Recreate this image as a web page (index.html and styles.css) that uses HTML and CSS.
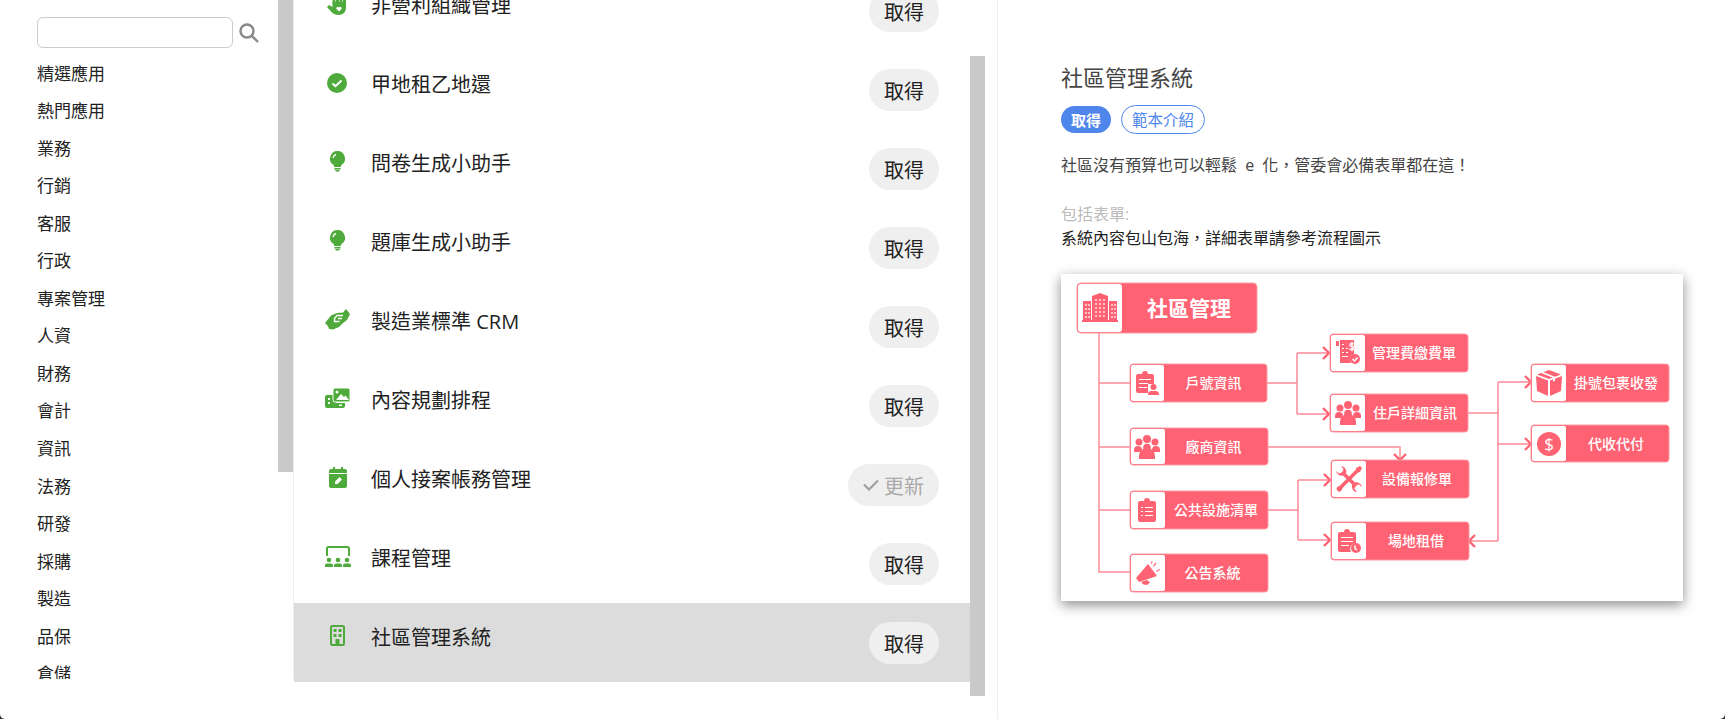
FILE: index.html
```html
<!DOCTYPE html>
<html lang="zh-Hant">

<head>
    <meta charset="UTF-8">
    <meta name="viewport" content="width=device-width, initial-scale=1.0">
    <title>範本中心</title>
    <link rel="stylesheet" href="styles.css">
</head>

<body>

    <div class="modal">
        <div class="sidebar">
            <div class="search">
                <input class="searchInput" type="text">
                <svg class="searchIcon" viewBox="0 0 20 20">
                    <circle cx="8" cy="8" r="6.5"></circle>
                    <path d="M12.8 12.8L19 19"></path>
                </svg>
            </div>
            <div class="catItem">精選應用</div>
            <div class="catItem">熱門應用</div>
            <div class="catItem">業務</div>
            <div class="catItem">行銷</div>
            <div class="catItem">客服</div>
            <div class="catItem">行政</div>
            <div class="catItem">專案管理</div>
            <div class="catItem">人資</div>
            <div class="catItem">財務</div>
            <div class="catItem">會計</div>
            <div class="catItem">資訊</div>
            <div class="catItem">法務</div>
            <div class="catItem">研發</div>
            <div class="catItem">採購</div>
            <div class="catItem">製造</div>
            <div class="catItem">品保</div>
            <div class="catItem">倉儲</div>
        </div>
        <div class="sideScroll">
            <div class="sideThumb"></div>
        </div>

        <div class="listWrap">
            <div class="list">
                <div class="row">
                    <svg class="rowIcon" viewBox="0 0 26 22">
                        <path d="M7.500 2h3v9h-3zM11 0h3v11h-3zM14.500 1h3v10h-3zM18 3h3v10h-3z"></path>
                        <path d="M7.500 9h13.500v6a7 7 0 0 1-7 7c-3.500 0-5.500-1-7.500-3l-4.500-5 2-2 3.500 2z"></path>
                        <path class="iconCut" d="M14 18.500l-2.700-2.800a1.500 1.500 0 0 1 2.700-1.200 1.500 1.500 0 0 1 2.700 1.200z"></path>
                    </svg>
                    <div class="rowName">非營利組織管理</div>
                    <button class="getBtn">取得</button>
                </div>
                <div class="row">
                    <svg class="rowIcon" viewBox="0 0 26 22">
                        <circle cx="12" cy="11" r="10"></circle>
                        <path class="iconLine" d="M7.500 11.500l3 2.700 6-5.700"></path>
                    </svg>
                    <div class="rowName">甲地租乙地還</div>
                    <button class="getBtn">取得</button>
                </div>
                <div class="row">
                    <svg class="rowIcon" viewBox="0 0 26 22">
                        <path d="M12.500 0a7.500 7.500 0 0 1 4.500 13.500c-.8.700-1 1.500-1.200 2.500H9.200c-.2-1-.4-1.800-1.200-2.500A7.500 7.500 0 0 1 12.500 0z"></path>
                        <path d="M9.300 17h6.400l-.3 1.500H9.600zM10 19h5l-1 1.500h-3z"></path>
                        <path class="iconLine thin" d="M8 7a4.500 4.500 0 0 1 3-3.500"></path>
                    </svg>
                    <div class="rowName">問卷生成小助手</div>
                    <button class="getBtn">取得</button>
                </div>
                <div class="row">
                    <svg class="rowIcon" viewBox="0 0 26 22">
                        <path d="M12.500 0a7.500 7.500 0 0 1 4.500 13.500c-.8.700-1 1.500-1.200 2.500H9.200c-.2-1-.4-1.800-1.200-2.500A7.500 7.500 0 0 1 12.500 0z"></path>
                        <path d="M9.300 17h6.400l-.3 1.500H9.600zM10 19h5l-1 1.500h-3z"></path>
                        <path class="iconLine thin" d="M8 7a4.500 4.500 0 0 1 3-3.500"></path>
                    </svg>
                    <div class="rowName">題庫生成小助手</div>
                    <button class="getBtn">取得</button>
                </div>
                <div class="row">
                    <svg class="rowIcon" viewBox="0 0 26 22">
                        <path d="M0 14L6 6.500 12 4l6-.5L21 0l4 5-3 6-4 3-4 4-6 2.500-4-.5-1-3z"></path>
                        <path class="iconLine thin" d="M18 6.500h-6l-2.500 3v3h5M13 9.500h4"></path>
                    </svg>
                    <div class="rowName">製造業標準 CRM</div>
                    <button class="getBtn">取得</button>
                </div>
                <div class="row">
                    <svg class="rowIcon" viewBox="0 0 26 22">
                        <path d="M2 7h9v13H2a2 2 0 0 1-2-2V9a2 2 0 0 1 2-2zM11 15h9v3a2 2 0 0 1-2 2h-7z"></path>
                        <path class="iconFront" d="M10 0h13a2 2 0 0 1 2 2v10a2 2 0 0 1-2 2H10a2 2 0 0 1-2-2V2a2 2 0 0 1 2-2z"></path>
                        <path class="iconCut" d="M11 12l5-6 3 3 1.500-1.500L24 12zM3 10h2v2H3zM3 14h2v2H3zM14 16.500h3v1.500h-3z"></path>
                        <circle class="iconCut" cx="12" cy="4" r="1.500"></circle>
                    </svg>
                    <div class="rowName">內容規劃排程</div>
                    <button class="getBtn">取得</button>
                </div>
                <div class="row">
                    <svg class="rowIcon" viewBox="0 0 26 22">
                        <path d="M8 0h2v3H8zM16 0h2v3h-2z"></path>
                        <path d="M6 2h14a2 2 0 0 1 2 2v15a2 2 0 0 1-2 2H6a2 2 0 0 1-2-2V4a2 2 0 0 1 2-2z"></path>
                        <path class="iconCut" d="M4 6h18v1H4zM10 17v-2.500l4.500-4.500 2.500 2.500-4.500 4.500z"></path>
                    </svg>
                    <div class="rowName">個人接案帳務管理</div>
                    <button class="getBtn doneBtn">
                        <svg class="doneCheck" viewBox="0 0 16 12">
                            <path d="M1 5.500L6 10.500 15 1.500"></path>
                        </svg>更新
                    </button>
                </div>
                <div class="row">
                    <svg class="rowIcon" viewBox="0 0 26 22">
                        <path class="iconLine green" d="M2 10V2.500a1.500 1.500 0 0 1 1.500-1.500h19a1.500 1.500 0 0 1 1.500 1.500V10"></path>
                        <circle cx="4" cy="14" r="2.300"></circle>
                        <circle cx="13" cy="14" r="2.300"></circle>
                        <circle cx="22" cy="14" r="2.300"></circle>
                        <path d="M0 21v-1.500a2 2 0 0 1 2-2h4a2 2 0 0 1 2 2V21zM9 21v-1.500a2 2 0 0 1 2-2h4a2 2 0 0 1 2 2V21zM18 21v-1.500a2 2 0 0 1 2-2h4a2 2 0 0 1 2 2V21z"></path>
                    </svg>
                    <div class="rowName">課程管理</div>
                    <button class="getBtn">取得</button>
                </div>
                <div class="row rowActive">
                    <svg class="rowIcon" viewBox="0 0 26 22">
                        <rect class="iconLine green" x="6" y="1" width="13" height="19" rx="1.500"></rect>
                        <path d="M8.500 4h3v3h-3zM13.500 4h3v3h-3zM8.500 9h3v3h-3zM13.500 9h3v3h-3zM10.500 14h4v6h-4z"></path>
                    </svg>
                    <div class="rowName">社區管理系統</div>
                    <button class="getBtn">取得</button>
                </div>
            </div>
            <div class="listThumb"></div>
        </div>

        <div class="detail">
            <div class="detailTitle">社區管理系統</div>
            <div class="detailBtns">
                <button class="primaryBtn">取得</button>
                <button class="outlineBtn">範本介紹</button>
            </div>
            <div class="detailDesc">社區沒有預算也可以輕鬆 e 化，管委會必備表單都在這！</div>
            <div class="includeLabel">包括表單:</div>
            <div class="includeText">系統內容包山包海，詳細表單請參考流程圖示</div>

            <svg class="flowChart" viewBox="0 0 622 327">
                <defs>
                    <symbol id="icClipUser" viewBox="0 0 24 24">
                        <path d="M3 3h4a3 3 0 0 1 6 0h4a2 2 0 0 1 2 2v8h-6v9H3a2 2 0 0 1-2-2V5a2 2 0 0 1 2-2z"></path>
                        <path class="flowCut" d="M4 8h12v1H4zM4 12h9v1H4zM4 16h8v1H4z"></path>
                        <circle cx="18.500" cy="16" r="3"></circle>
                        <path d="M13 24v-1.500a3 3 0 0 1 3-2.500h5a3 3 0 0 1 3 2.500V24z"></path>
                    </symbol>
                    <symbol id="icDoc" viewBox="0 0 24 24">
                        <path d="M0 1h3v5H0zM4 0h14v14a6 6 0 0 0-3 9H4z"></path>
                        <path class="flowCut" d="M6 4h2v1H6zM6 8h2v1H6zM6 12h2v1H6zM6 16h6v1H6zM10 8h2v1h-2zM10 12h2v1h-2z"></path>
                        <text class="flowDollar" x="13" y="10">$</text>
                        <circle cx="19" cy="19" r="5"></circle>
                        <path class="flowStroke" d="M16.500 19l2 2 3-3.500"></path>
                    </symbol>
                    <symbol id="icPeople" viewBox="0 0 26 24">
                        <circle cx="5" cy="7" r="3.500"></circle>
                        <circle cx="21" cy="7" r="3.500"></circle>
                        <circle cx="13" cy="4" r="4"></circle>
                        <path d="M0 17v-2a4 4 0 0 1 8 0v2zM18 17v-2a4 4 0 0 1 8 0v2z"></path>
                        <circle cx="13" cy="12.500" r="3.800"></circle>
                        <path d="M5 24v-3a6 6 0 0 1 16 0v3z"></path>
                    </symbol>
                    <symbol id="icWrench" viewBox="0 0 26 26">
                        <path class="flowInk" d="M6 6L20 20M22 4L5 21"></path>
                        <path d="M0 5a5.500 5.500 0 0 0 8 4l2-2A5.500 5.500 0 0 0 5 0l2.500 3-1 3.500-3.500 1z"></path>
                        <path d="M26 21a5.500 5.500 0 0 0-8-4l-2 2a5.500 5.500 0 0 0 5 7l-2.500-3 1-3.500 3.500-1z"></path>
                        <path d="M20 2l4-2 2 2-2 4-3 .5zM1 21l5-2 1.500 1.500L5 25l-2 1-2.500-2.500z"></path>
                    </symbol>
                    <symbol id="icList" viewBox="0 0 24 24">
                        <path d="M5 3h4a3 3 0 0 1 6 0h4a2 2 0 0 1 2 2v17a2 2 0 0 1-2 2H5a2 2 0 0 1-2-2V5a2 2 0 0 1 2-2z"></path>
                        <path class="flowCut" d="M6 9h2v1H6zM10 9h8v1h-8zM6 13h2v1H6zM10 13h8v1h-8zM6 17h2v1H6zM10 17h8v1h-8z"></path>
                    </symbol>
                    <symbol id="icHorn" viewBox="0 0 24 24">
                        <path d="M12 3l9 12-18 6-3-4z"></path>
                        <path d="M5 21l6-2 3 2.500-3 2.500-3.500-.5zM17 5l2.500-3.500 1 .7-2.500 3.500zM20 10l3.500-2 .5 1-3.500 2zM15 3l.5-3h1l-.5 3z"></path>
                    </symbol>
                    <symbol id="icClock" viewBox="0 0 24 24">
                        <path d="M3 3h4a3 3 0 0 1 6 0h4a2 2 0 0 1 2 2v9a6 6 0 0 0-5 9H3a2 2 0 0 1-2-2V5a2 2 0 0 1 2-2z"></path>
                        <path class="flowCut" d="M4 8h12v1H4zM4 12h12v1H4zM4 16h8v1H4z"></path>
                        <circle cx="19" cy="19" r="5"></circle>
                        <path class="flowStroke" d="M18 16.500v3l2 1.500"></path>
                    </symbol>
                    <symbol id="icBox" viewBox="0 0 26 26">
                        <path d="M13 0l12 4.500L13 9 1 4.500zM0 6l12 4.500V26L1 21zM26 6l-12 4.500V26l11-5z"></path>
                        <path class="flowCut" d="M7 2l12 4.700v4l-2 1v-4L5 3z"></path>
                    </symbol>
                    <symbol id="icCoin" viewBox="0 0 24 24">
                        <circle cx="12" cy="12" r="12"></circle>
                        <text class="flowCoin" x="12" y="18">$</text>
                    </symbol>
                </defs>

                <path class="flowLine" d="M38 59V298H69M38 109H69M38 173H69M38 236H69"></path>
                <path class="flowLine" d="M206 109H236M236 79V140M236 79H268M236 140H268"></path>
                <path class="flowLine" d="M207 173H339V185"></path>
                <path class="flowLine" d="M207 236H237M237 206V266M237 206H269M237 266H269"></path>
                <path class="flowLine" d="M407 139H437M437 108V267M437 108H469M437 170H469M437 267H409"></path>
                <path class="flowArrow" d="M262 73l6 6-6 6M262 134l6 6-6 6M263 200l6 6-6 6M263 260l6 6-6 6M464 102l6 6-6 6M464 164l6 6-6 6M333 180l6 6 6-6M414 261l-6 6 6 6"></path>

                <rect class="flowNode" x="16" y="9" width="180" height="50" rx="4"></rect>
                <rect class="flowWhite" x="17" y="10" width="44" height="48" rx="3"></rect>
                <path class="flowFill" d="M22 27h8v20h-8zM48 27h8v20h-8zM31 22l8-3 8 3v25H31zM21 46h36v2H21z"></path>
                <path class="flowDots" d="M25 30v15M28 30v15M35 25v20M39 25v20M43 25v20M51 30v15M54 30v15"></path>
                <text class="rootText" x="128" y="42">社區管理</text>

                <rect class="flowNode" x="69" y="90" width="137" height="38" rx="3"></rect>
                <rect class="flowWhite" x="70" y="91" width="33" height="36" rx="2"></rect>
                <use class="flowFill" href="#icClipUser" x="74" y="97" width="24" height="24"></use>
                <text class="nodeText" x="152.500" y="114">戶號資訊</text>

                <rect class="flowNode" x="69" y="154" width="138" height="37" rx="3"></rect>
                <rect class="flowWhite" x="70" y="155" width="34" height="35" rx="2"></rect>
                <use class="flowFill" href="#icPeople" x="73" y="161" width="26" height="24"></use>
                <text class="nodeText" x="152.500" y="178">廠商資訊</text>

                <rect class="flowNode" x="69" y="217" width="138" height="38" rx="3"></rect>
                <rect class="flowWhite" x="70" y="218" width="34" height="36" rx="2"></rect>
                <use class="flowFill" href="#icList" x="74" y="224" width="24" height="24"></use>
                <text class="nodeText" x="155" y="241">公共設施清單</text>

                <rect class="flowNode" x="69" y="280" width="138" height="38" rx="3"></rect>
                <rect class="flowWhite" x="70" y="281" width="34" height="36" rx="2"></rect>
                <use class="flowFill" href="#icHorn" x="75" y="287" width="24" height="24"></use>
                <text class="nodeText" x="151.500" y="304">公告系統</text>

                <rect class="flowNode" x="269" y="60" width="138" height="38" rx="3"></rect>
                <rect class="flowWhite" x="270" y="61" width="34" height="36" rx="2"></rect>
                <use class="flowFill" href="#icDoc" x="275" y="66" width="24" height="24"></use>
                <text class="nodeText" x="353" y="84">管理費繳費單</text>

                <rect class="flowNode" x="269" y="120" width="138" height="38" rx="3"></rect>
                <rect class="flowWhite" x="270" y="121" width="34" height="36" rx="2"></rect>
                <use class="flowFill" href="#icPeople" x="274" y="127" width="26" height="24"></use>
                <text class="nodeText" x="354" y="144">住戶詳細資訊</text>

                <rect class="flowNode" x="270" y="186" width="138" height="38" rx="3"></rect>
                <rect class="flowWhite" x="271" y="187" width="34" height="36" rx="2"></rect>
                <use class="flowFill" href="#icWrench" x="275" y="192" width="26" height="26"></use>
                <text class="nodeText" x="356" y="210">設備報修單</text>

                <rect class="flowNode" x="270" y="248" width="138" height="38" rx="3"></rect>
                <rect class="flowWhite" x="271" y="249" width="34" height="36" rx="2"></rect>
                <use class="flowFill" href="#icClock" x="276" y="255" width="24" height="24"></use>
                <text class="nodeText" x="355" y="272">場地租借</text>

                <rect class="flowNode" x="470" y="90" width="138" height="38" rx="3"></rect>
                <rect class="flowWhite" x="471" y="91" width="34" height="36" rx="2"></rect>
                <use class="flowFill" href="#icBox" x="475" y="96" width="26" height="26"></use>
                <text class="nodeText" x="555" y="114">掛號包裹收發</text>

                <rect class="flowNode" x="470" y="151" width="138" height="37" rx="3"></rect>
                <rect class="flowWhite" x="471" y="152" width="34" height="35" rx="2"></rect>
                <use class="flowFill" href="#icCoin" x="476" y="158" width="24" height="24"></use>
                <text class="nodeText" x="555" y="175">代收代付</text>
            </svg>
        </div>
    </div>

</body>

</html>
```

FILE: styles.css
```css
* {
    box-sizing: border-box;
}

body {
    margin: 0;
    height: 719px;
    overflow: hidden;
    background-color: #333;
    font-family: "Open Sans", "Noto Sans CJK TC", sans-serif;
    color: #222;
}

.modal {
    display: flex;
    height: 719px;
    background-color: #fff;
    border-radius: 0 0 5px 5px;
    overflow: hidden;
}

/* left category column */
.sidebar {
    flex: 0 0 278px;
    height: 679px;
    padding: 17px 0 0 37px;
    overflow: hidden;
}

.search {
    display: flex;
    align-items: center;
    gap: 6px;
    margin-bottom: 6.5px;
}

.searchInput {
    width: 196px;
    height: 31px;
    border: 1px solid #ccc;
    border-radius: 6px;
}

.searchIcon {
    width: 20px;
    height: 20px;
    fill: none;
    stroke: #888;
    stroke-width: 2.4;
}

.catItem {
    height: 37.55px;
    line-height: 37.55px;
    font-size: 17px;
}

.sideScroll {
    flex: 0 0 16px;
    height: 679px;
    border-right: 1px solid #eee;
}

.sideThumb {
    width: 15px;
    height: 472px;
    background-color: #c9c9c9;
}

/* middle app list */
.listWrap {
    flex: 0 0 703px;
    display: flex;
    align-items: flex-start;
}

.list {
    flex: 0 0 676px;
    margin-top: -29px;
}

.row {
    display: flex;
    align-items: flex-start;
    height: 79px;
    padding: 22px 31px 0;
}

.rowActive {
    background-color: #dcdcdc;
}

.rowIcon {
    flex: 0 0 26px;
    width: 26px;
    height: 22px;
    overflow: visible;
    fill: #4faa3c;
}

.iconLine {
    fill: none;
    stroke: #fff;
    stroke-width: 2;
}

.iconLine.thin {
    stroke-width: 1.4;
}

.iconLine.green {
    stroke: #4faa3c;
}

.iconCut {
    fill: #fff;
}

.iconFront {
    stroke: #fff;
    stroke-width: 1;
}

.rowName {
    flex: 1;
    margin: -1px 0 0 20px;
    line-height: 28px;
    font-size: 20px;
    color: #222;
}

.getBtn {
    display: flex;
    align-items: center;
    justify-content: center;
    gap: 5px;
    height: 42px;
    margin-top: -3px;
    padding: 0 15px;
    border: none;
    border-radius: 21px;
    background-color: #efefef;
    font-family: inherit;
    font-size: 20px;
    color: #222;
}

.doneBtn {
    color: #aaa;
}

.doneCheck {
    width: 16px;
    height: 12px;
    fill: none;
    stroke: #a0a0a0;
    stroke-width: 2.2;
}

.listThumb {
    flex: 0 0 15px;
    height: 640px;
    margin-top: 56px;
    background-color: #c9c9c9;
}

/* right detail */
.detail {
    flex: 1;
    padding: 63px 0 0 63px;
    border-left: 1px solid #eee;
}

.detailTitle {
    line-height: 28px;
    font-size: 22px;
    color: #444;
}

.detailBtns {
    display: flex;
    align-items: center;
    gap: 10px;
    margin-top: 14px;
}

.primaryBtn,
.outlineBtn {
    padding: 0;
    border-radius: 15px;
    font-family: inherit;
    font-size: 15px;
}

.primaryBtn {
    width: 50px;
    height: 27px;
    border: none;
    background-color: #4f86ec;
    font-weight: 700;
    color: #fff;
}

.outlineBtn {
    width: 84px;
    height: 29px;
    border: 1px solid #4f86ec;
    background-color: #fff;
    font-size: 15.5px;
    color: #4f86ec;
}

.detailDesc {
    margin-top: 19px;
    line-height: 24px;
    font-size: 16px;
    word-spacing: 4px;
    color: #444;
}

.includeLabel {
    margin-top: 25px;
    line-height: 24px;
    font-size: 16px;
    color: #bbb;
}

.includeText {
    line-height: 24px;
    font-size: 16px;
    color: #222;
}

/* flow chart picture */
.flowChart {
    display: block;
    width: 622px;
    height: 327px;
    margin-top: 24px;
    background-color: #fff;
    box-shadow: 0 4px 12px rgba(0, 0, 0, 0.45);
}

.flowLine {
    fill: none;
    stroke: #ff8a96;
    stroke-width: 1.5;
}

.flowArrow {
    fill: none;
    stroke: #ff6373;
    stroke-width: 2.4;
}

.flowNode {
    fill: #ff6373;
    stroke: #ff9aa4;
    stroke-width: 1;
}

.flowWhite,
.flowCut {
    fill: #fff;
}

.flowFill {
    fill: #ff6373;
}

.flowInk {
    fill: none;
    stroke: #ff6373;
    stroke-width: 3.6;
}

.flowDots {
    fill: none;
    stroke: #fff;
    stroke-width: 1.200;
    stroke-dasharray: 2 2;
}

.flowStroke {
    fill: none;
    stroke: #fff;
    stroke-width: 1.500;
}

.flowDollar {
    font-size: 11px;
    font-family: "Open Sans", sans-serif;
    fill: #ff6373;
    stroke: #fff;
    stroke-width: 0.6;
}

.flowCoin {
    font-size: 17px;
    font-family: "Open Sans", sans-serif;
    text-anchor: middle;
    fill: #fff;
}

.rootText,
.nodeText {
    font-family: "Noto Sans CJK TC", sans-serif;
    font-weight: 500;
    text-anchor: middle;
    fill: #fff;
}

.rootText {
    font-size: 21px;
    font-weight: 700;
}

.nodeText {
    font-size: 14px;
}
```
